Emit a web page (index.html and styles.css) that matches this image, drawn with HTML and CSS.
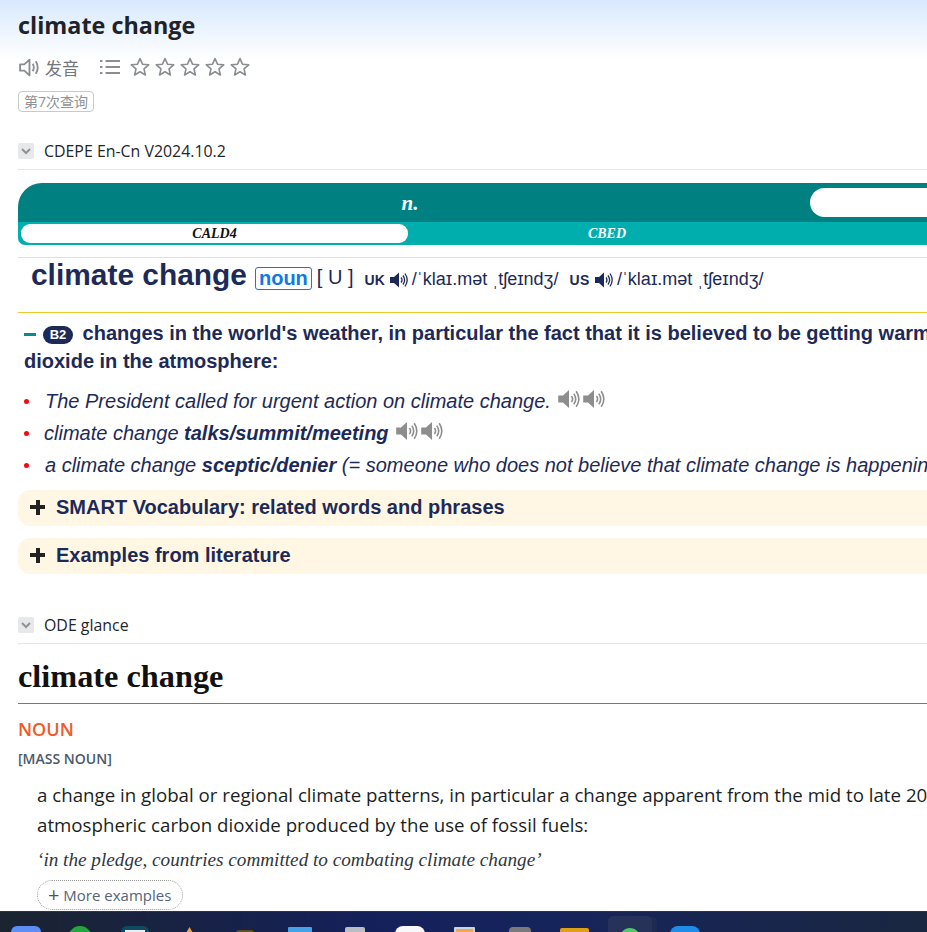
FILE: index.html
```html
<!DOCTYPE html>
<html>
<head>
    <title>climate change</title>
    <meta name="viewport" content="width=device-width, initial-scale=1.0">
    <link rel="stylesheet" href="styles.css">
</head>
<body>
    <svg class="defs" width="0" height="0">
        <symbol id="chevron" viewBox="0 0 16 16">
            <path d="M4 6 L8 10 L12 6" fill="none" stroke="#8f9296" stroke-width="2"/>
        </symbol>
        <symbol id="star" viewBox="0 0 20 20">
            <path d="M10 1.6 L12.5 7.2 L18.7 7.8 L14 11.9 L15.4 18 L10 14.8 L4.6 18 L6 11.9 L1.3 7.8 L7.5 7.2 Z" fill="none" stroke="#8a8d91" stroke-width="1.6" stroke-linejoin="round"/>
        </symbol>
        <symbol id="speaker" viewBox="0 0 20 20">
            <path d="M1 7 H5 L10 2.5 V17.5 L5 13 H1 Z" fill="currentColor"/>
            <path d="M12 7.5 Q14 10 12 12.5 M14 5.5 Q17.2 10 14 14.5 M16 3.5 Q20.4 10 16 16.5" fill="none" stroke="currentColor" stroke-width="1.3"/>
        </symbol>
    </svg>

    <div class="page">
        <div class="scroll">
            <div class="head">
                <h1>climate change</h1>
                <div class="tools">
                    <svg class="tool-voice" width="23" height="21" viewBox="0 0 22 20">
                        <path d="M2 7 H6 L11 2.5 V17.5 L6 13 H2 Z" fill="none" stroke="#8a8d91" stroke-width="1.8" stroke-linejoin="round"/>
                        <path d="M14 6.5 Q16.4 10 14 13.5 M17 4 Q20.6 10 17 16" fill="none" stroke="#8a8d91" stroke-width="1.8"/>
                    </svg>
                    <span class="voice-label">发音</span>
                    <svg class="tool-list" width="20" height="16" viewBox="0 0 20 16">
                        <path d="M0 2 H2.4 M0 8 H2.4 M0 14 H2.4 M5.5 2 H20 M5.5 8 H20 M5.5 14 H20" stroke="#8a8d91" stroke-width="2"/>
                    </svg>
                    <div class="stars">
                        <svg width="20" height="20"><use href="#star"/></svg>
                        <svg width="20" height="20"><use href="#star"/></svg>
                        <svg width="20" height="20"><use href="#star"/></svg>
                        <svg width="20" height="20"><use href="#star"/></svg>
                        <svg width="20" height="20"><use href="#star"/></svg>
                    </div>
                </div>
                <span class="count">第7次查询</span>
            </div>

            <div class="dict-title first">
                <span class="fold"><svg width="16" height="16"><use href="#chevron"/></svg></span>
                CDEPE En-Cn V2024.10.2
            </div>

            <div class="tabs">
                <div class="pos-row">
                    <div class="pos-tab">n.</div>
                    <div class="pos-tab active"></div>
                </div>
                <div class="src-row">
                    <div class="src-tab active">CALD4</div>
                    <div class="src-tab">CBED</div>
                </div>
            </div>

            <div class="cald">
                <div class="entry-head">
                    <span class="headword">climate change</span>
                    <span class="pos">noun</span>
                    <span class="gram">[ U ]</span>
                    <span class="region first-region">UK</span>
                    <svg class="sp" width="20" height="20"><use href="#speaker"/></svg>
                    <span class="ipa">/ˈklaɪ.mət ˌtʃeɪndʒ/</span>
                    <span class="region">US</span>
                    <svg class="sp" width="20" height="20"><use href="#speaker"/></svg>
                    <span class="ipa">/ˈklaɪ.mət ˌtʃeɪndʒ/</span>
                </div>

                <div class="def">
                    <span class="dash"></span><span class="level">B2</span>
                    changes in the world's weather, in particular the fact that it is believed to be getting warmer as a result of human activity increasing the level of carbon<br>dioxide in the atmosphere:
                </div>

                <ul class="examples">
                    <li class="ex-one">The President called for urgent action on climate change.
                        <svg class="ex-sp" width="24" height="24"><use href="#speaker"/></svg><svg class="ex-sp" width="24" height="24"><use href="#speaker"/></svg>
                    </li>
                    <li class="ex-two">climate change <b>talks/summit/meeting</b>
                        <svg class="ex-sp" width="24" height="24"><use href="#speaker"/></svg><svg class="ex-sp" width="24" height="24"><use href="#speaker"/></svg>
                    </li>
                    <li class="ex-three">a climate change <b>sceptic/denier</b> (= someone who does not believe that climate change is happening)</li>
                </ul>

                <div class="more-box"><span class="plus"></span>SMART Vocabulary: related words and phrases</div>
                <div class="more-box"><span class="plus"></span>Examples from literature</div>
            </div>

            <div class="dict-title second">
                <span class="fold"><svg width="16" height="16"><use href="#chevron"/></svg></span>
                ODE glance
            </div>

            <div class="ode">
                <h2>climate change</h2>
                <div class="ode-pos">NOUN</div>
                <div class="ode-gram">[MASS NOUN]</div>
                <div class="ode-def">a change in global or regional climate patterns, in particular a change apparent from the mid to late 20th century onwards and attributed largely to the increased levels of<br>atmospheric carbon dioxide produced by the use of fossil fuels:</div>
                <div class="ode-ex">‘in the pledge, countries committed to combating climate change’</div>
                <span class="more-ex"><span class="more-plus">+</span> More examples</span>
            </div>
        </div>

        <div class="taskbar">
            <div class="slot"><span class="app app-blue"></span></div>
            <div class="slot"><span class="app app-green"></span></div>
            <div class="slot"><span class="app app-teal"></span></div>
            <div class="slot"><span class="app app-orange"></span></div>
            <div class="slot"><span class="app app-yellow"></span></div>
            <div class="slot"><span class="app app-sky"></span></div>
            <div class="slot"><span class="app app-paper"></span></div>
            <div class="slot"><span class="app app-white"></span></div>
            <div class="slot"><span class="app app-window"></span></div>
            <div class="slot"><span class="app app-gray"></span></div>
            <div class="slot"><span class="app app-folder"></span></div>
            <div class="slot"><span class="frame"><span class="app app-wechat"></span></span></div>
            <div class="slot"><span class="app app-last"></span></div>
        </div>
    </div>
</body>
</html>
```

FILE: styles.css
```css
* {
    box-sizing: border-box;
}

html, body {
    margin: 0;
    height: 100%;
    overflow: hidden;
}

body {
    background-color: white;
    font-family: "Open Sans", "Noto Sans CJK SC", sans-serif;
    color: #222;
}

.defs {
    display: block;
}

.page {
    height: 932px;
    display: flex;
    flex-direction: column;
}

.scroll {
    flex: 1;
    width: 1500px;
    overflow: hidden;
}

/* header */
.head {
    padding: 9px 18px 0;
    height: 124px;
    background: linear-gradient(to bottom, #d8e9fd 0, #ffffff 60px);
}

.head h1 {
    margin: 0;
    font-size: 23.4px;
    line-height: 32px;
    font-weight: 700;
    color: #1f2329;
}

.tools {
    display: flex;
    align-items: center;
    margin-top: 14px;
    height: 24px;
    color: #73777c;
}

.voice-label {
    margin-left: 4px;
    font-size: 17px;
}

.tool-list {
    margin-left: 21px;
}

.stars {
    display: flex;
    gap: 5px;
    margin-left: 10px;
}

.count {
    display: inline-block;
    margin-top: 12px;
    padding: 0 5px;
    height: 21px;
    line-height: 19px;
    font-size: 14px;
    color: #8f9296;
    border: 1px solid #c8cacd;
    border-radius: 4px;
}

.dict-title {
    margin-left: 18px;
    height: 37px;
    display: flex;
    align-items: center;
    font-size: 15.9px;
    color: #22262b;
    border-bottom: 1px solid #e6e6e6;
}

.dict-title.first {
    margin-top: 9px;
}

.dict-title.second {
    margin-top: 33px;
}

.fold {
    display: flex;
    width: 16px;
    height: 16px;
    margin-right: 10px;
    background-color: #e7e8ea;
    border-radius: 2px;
}

/* tabs */
.tabs {
    margin: 13px 0 0 18px;
    width: 1400px;
    height: 62px;
    border-radius: 24px 0 0 7px;
    overflow: hidden;
    font-family: "Liberation Serif", serif;
    font-style: italic;
    font-weight: 700;
    text-align: center;
}

.pos-row {
    display: flex;
    height: 39px;
    background-color: #008080;
    color: white;
}

.pos-tab {
    width: 784px;
    font-size: 21px;
    line-height: 40px;
}

.pos-tab.active {
    margin: 5px 0 5px 8px;
    width: 400px;
    background-color: white;
    border-radius: 15px;
}

.src-row {
    display: flex;
    height: 23px;
    padding: 2px 0 2px 3px;
    background-color: #00aeae;
    color: white;
}

.src-tab {
    width: 398px;
    font-size: 14px;
    line-height: 19px;
}

.src-tab.active {
    width: 387px;
    background-color: white;
    border-radius: 9px;
    color: #111;
}

/* cambridge entry */
.cald {
    margin: 12px 0 0 18px;
    border-top: 1px solid #e0e0e0;
    font-family: "Liberation Sans", Arial, sans-serif;
    color: #1d2a57;
}

.entry-head {
    display: flex;
    align-items: center;
    height: 55px;
    padding: 0 0 20px 13px;
    border-bottom: 1px solid #f0c92c;
    white-space: nowrap;
}

.headword {
    font-size: 29.9px;
    font-weight: 700;
}

.pos {
    margin: 6px 0 0 8px;
    padding: 0 3px;
    height: 23px;
    line-height: 21px;
    font-size: 20px;
    font-weight: 700;
    color: #0f7ae5;
    border: 1px solid #0f7ae5;
    border-radius: 3px;
}

.gram {
    margin: 4px 0 0 5px;
    font-size: 20px;
}

.region {
    margin: 9px 0 0 11px;
    font-size: 14px;
    font-weight: 700;
}

.region + .sp + .ipa + .region {
    letter-spacing: 0.5px;
}

.sp {
    margin: 10px 3px 0 4px;
}

.ipa {
    margin-top: 8px;
    font-size: 18px;
}

.def {
    margin: 6px 0 0 6px;
    font-size: 20px;
    line-height: 28px;
    font-weight: 700;
    white-space: nowrap;
}

.dash {
    display: inline-block;
    width: 12px;
    height: 3px;
    margin-right: 7px;
    vertical-align: 4px;
    background-color: #0b8a8a;
}

.level {
    display: inline-block;
    width: 30px;
    height: 18px;
    margin-right: 4px;
    line-height: 18px;
    vertical-align: 1px;
    font-size: 13px;
    text-align: center;
    color: white;
    background-color: #1d2a57;
    border-radius: 9px;
}

.examples {
    list-style: none;
    margin: 10px 0 0 6px;
    padding: 0;
    font-size: 20px;
    font-style: italic;
    white-space: nowrap;
}

.examples li {
    position: relative;
    height: 32px;
    line-height: 32px;
    padding-left: 20px;
}

.examples .ex-one,
.examples .ex-three {
    padding-left: 21px;
}

.examples li::before {
    content: "";
    position: absolute;
    left: 0;
    top: 14px;
    width: 5px;
    height: 5px;
    border-radius: 50%;
    background-color: #f00a14;
}

.ex-sp {
    color: #8d8d8d;
    vertical-align: -3px;
    margin-left: 1px;
}

.ex-sp + .ex-sp {
    margin-left: 1px;
}

.more-box {
    display: flex;
    align-items: center;
    height: 36px;
    margin-top: 12px;
    padding: 0 0 2px 12px;
    font-size: 20px;
    font-weight: 700;
    background-color: #fff7e4;
    border-radius: 12px 0 0 12px;
}

.examples + .more-box {
    margin-top: 9px;
}

.plus {
    width: 15px;
    height: 15px;
    margin-right: 11px;
    background: linear-gradient(#222, #222) center / 15px 4px no-repeat, linear-gradient(#222, #222) center / 4px 15px no-repeat;
}

/* ode */
.ode {
    margin-left: 18px;
}

.ode h2 {
    margin: 0;
    height: 60px;
    padding-top: 13px;
    font-family: "Liberation Serif", serif;
    font-size: 32.3px;
    line-height: 38px;
    font-weight: 700;
    color: #111;
    border-bottom: 1px solid #777;
}

.ode-pos {
    margin-top: 12px;
    font-size: 18px;
    line-height: 26px;
    font-weight: 600;
    color: #f05a28;
}

.ode-gram {
    margin-top: 7px;
    font-size: 14px;
    line-height: 20px;
    font-weight: 600;
    color: #4a5a6a;
}

.ode-def {
    margin: 11px 0 0 19px;
    font-size: 18.7px;
    line-height: 30px;
    color: #1b1f24;
    white-space: nowrap;
}

.ode-ex {
    margin: 7px 0 0 19px;
    font-family: "Liberation Serif", serif;
    font-style: italic;
    font-size: 19.2px;
    line-height: 26px;
    color: #2f3640;
}

.more-ex {
    display: inline-block;
    margin: 7px 0 0 19px;
    padding: 0 11px 0 10px;
    height: 30px;
    line-height: 28px;
    font-size: 15px;
    color: #56637a;
    border: 1px dotted #999;
    border-radius: 15px;
}

.more-plus {
    font-size: 20px;
    line-height: 20px;
    vertical-align: -1px;
    color: #555;
}

/* taskbar, only the top of the icons is on screen */
.taskbar {
    flex: none;
    display: flex;
    height: 21px;
    overflow: hidden;
    background: linear-gradient(to right, #1b2430 0, #14205a 40%, #16245c 60%, #1a2740 100%);
    border-top: 1px solid #2c3448;
}

.slot {
    flex: none;
    display: flex;
    justify-content: center;
    width: 55px;
}

.slot:first-child {
    width: 52px;
}

.frame {
    display: flex;
    justify-content: center;
    width: 44px;
    height: 30px;
    margin-top: 4px;
    background-color: #27325a;
    border-radius: 5px 5px 0 0;
    box-shadow: 6px 0 0 -1px #1f2a52;
}

.app {
    display: block;
    width: 28px;
    height: 30px;
    margin-top: 14px;
    border-radius: 6px;
}

.app-blue { background-color: #5d8ef6; width: 30px; }
.app-green { background-color: #22a73d; border-radius: 50%; width: 26px; }
.app-teal { background: linear-gradient(#e8f0f4, #e8f0f4) center 4px / 20px 100% no-repeat, #0e4a60; }
.app-orange { background-color: #f0a030; width: 14px; margin-top: 15px; clip-path: polygon(50% 0, 100% 40%, 100% 100%, 0 100%, 0 40%); }
.app-yellow { background: linear-gradient(#5a4d1c, #c9a81e); width: 18px; margin-top: 18px; border-radius: 3px; }
.app-sky { background-color: #44a3e8; width: 24px; margin-top: 15px; border-radius: 1px; }
.app-paper { background-color: #b9bec4; width: 20px; margin-top: 15px; border-radius: 2px; }
.app-white { background: radial-gradient(circle at 50% 100%, #8cc6ee 0, #8cc6ee 5px, #f7f8fa 6px); width: 30px; border-radius: 8px; }
.app-window { background-color: #f0a850; width: 21px; margin-top: 15px; border: 2px solid #c8d4e2; border-radius: 1px; }
.app-gray { background-color: #7a7a7c; width: 22px; margin-top: 15px; border-radius: 4px; }
.app-folder { background-color: #e0a014; width: 29px; margin-top: 16px; border-radius: 2px; }
.app-wechat { background-color: #52c668; width: 24px; margin-top: 12px; border-radius: 50%; }
.app-last { background-color: #1f8ce8; width: 30px; border-radius: 8px; }
```
